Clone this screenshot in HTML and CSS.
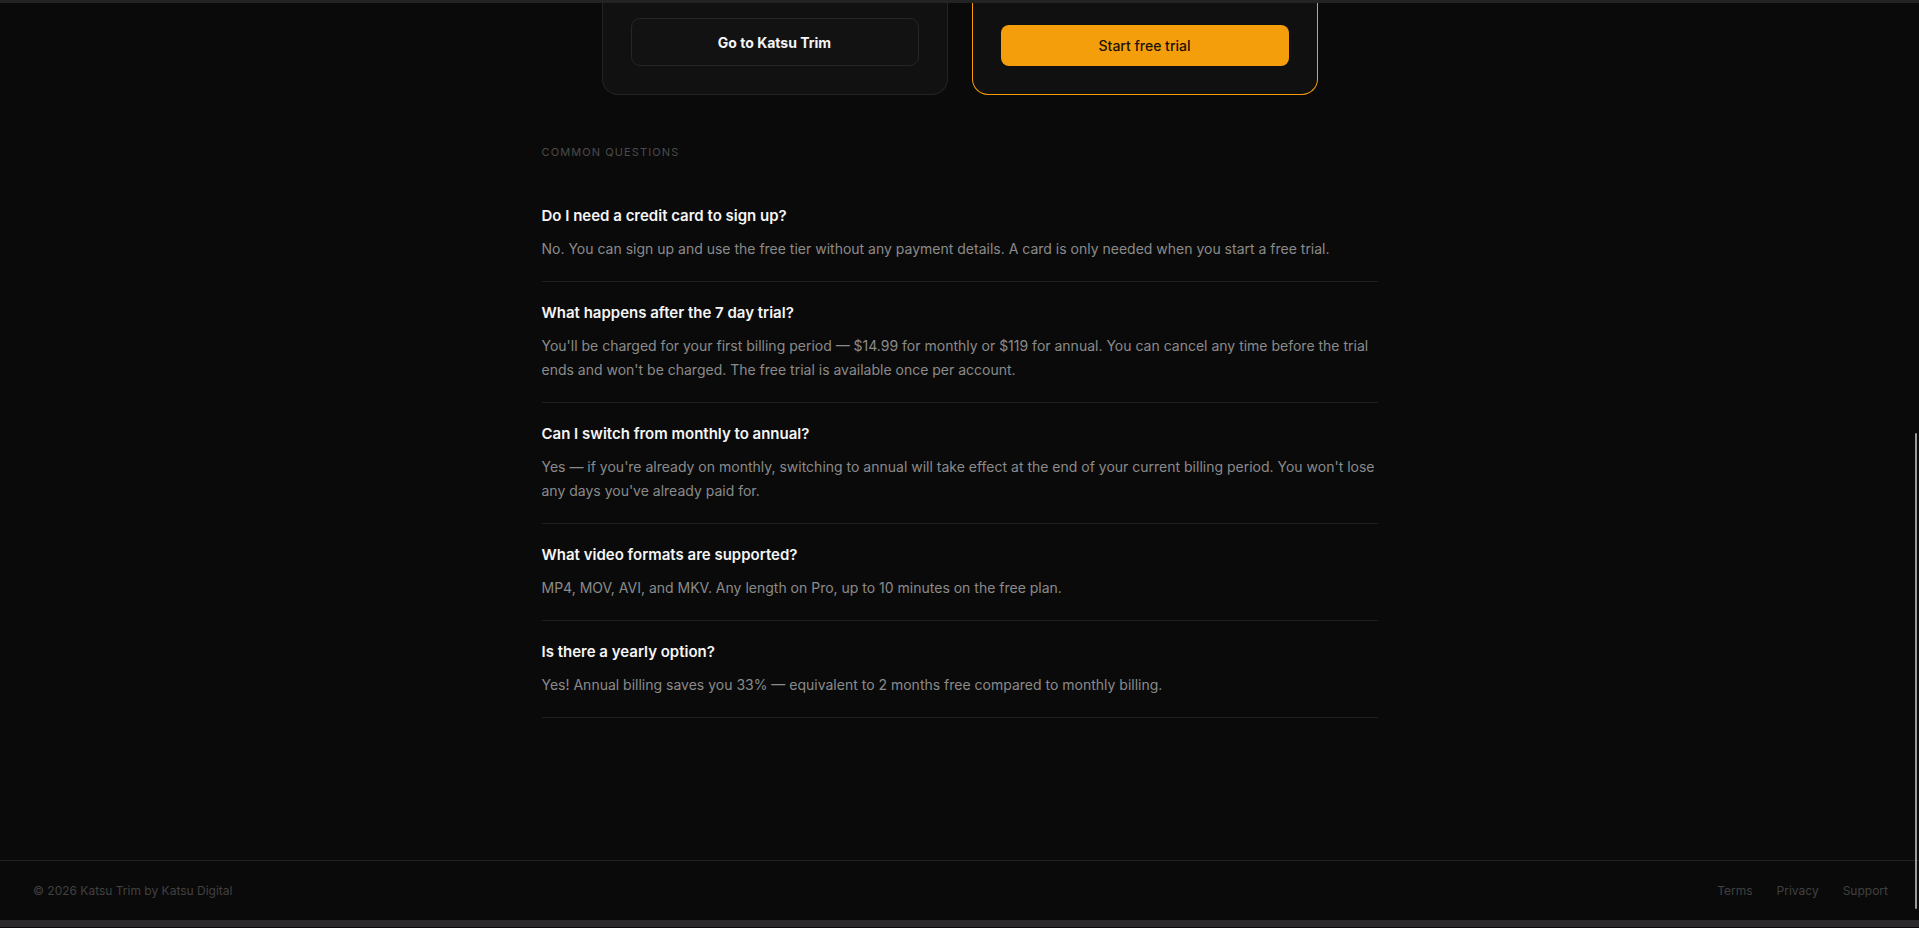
FILE: index.html
```html
<!DOCTYPE html>
<html lang="en">
<head>
<meta charset="utf-8">
<title>Katsu Trim — Pricing</title>
<link rel="stylesheet" href="styles.css">
</head>
<body>
  <div class="topline"></div>

  <main class="page">
    <div class="plans">
      <div class="plan">
        <a class="btn btn-ghost" href="#">Go to Katsu Trim</a>
      </div>
      <div class="plan plan-pro">
        <a class="btn btn-primary" href="#">Start free trial</a>
      </div>
    </div>

    <section class="faq">
      <h2 class="faq-label">Common questions</h2>
      <div class="faq-list">
        <div class="faq-item">
          <h3 class="faq-q">Do I need a credit card to sign up?</h3>
          <p class="faq-a">No. You can sign up and use the free tier without any payment details. A card is only needed when you start a free trial.</p>
        </div>
        <div class="faq-item">
          <h3 class="faq-q">What happens after the 7 day trial?</h3>
          <p class="faq-a">You'll be charged for your first billing period — $14.99 for monthly or $119 for annual. You can cancel any time before the trial ends and won't be charged. The free trial is available once per account.</p>
        </div>
        <div class="faq-item">
          <h3 class="faq-q">Can I switch from monthly to annual?</h3>
          <p class="faq-a">Yes — if you're already on monthly, switching to annual will take effect at the end of your current billing period. You won't lose any days you've already paid for.</p>
        </div>
        <div class="faq-item">
          <h3 class="faq-q">What video formats are supported?</h3>
          <p class="faq-a">MP4, MOV, AVI, and MKV. Any length on Pro, up to 10 minutes on the free plan.</p>
        </div>
        <div class="faq-item">
          <h3 class="faq-q">Is there a yearly option?</h3>
          <p class="faq-a">Yes! Annual billing saves you 33% — equivalent to 2 months free compared to monthly billing.</p>
        </div>
      </div>
    </section>
  </main>

  <footer class="footer">
    <span class="footer-copy">© 2026 Katsu Trim by Katsu Digital</span>
    <nav class="footer-links">
      <a href="#">Terms</a>
      <a href="#">Privacy</a>
      <a href="#">Support</a>
    </nav>
  </footer>

  <div class="bottombar"></div>
  <div class="scroll-thumb"></div>
</body>
</html>
```

FILE: styles.css
```css
* {
  box-sizing: border-box;
}

html,
body {
  margin: 0;
  padding: 0;
  background: #0a0a0a;
  color: #f2f2f2;
  font-family: Inter, "Noto Sans", "Liberation Sans", sans-serif;
  overflow: hidden;
}

a {
  text-decoration: none;
  color: inherit;
}

.topline {
  height: 3px;
  background: #232323;
}

/* plan cards (lower part) */
.plans {
  display: grid;
  grid-template-columns: 1fr 1fr;
  gap: 24px;
  max-width: 716px;
  margin: 0 auto;
}

.plan {
  display: flex;
  flex-direction: column;
  justify-content: flex-end;
  background: #111111;
  border: 1px solid #232323;
  border-top: none;
  border-radius: 0 0 16px 16px;
  padding: 15px 28px 28px;
}

.plan-pro {
  border-color: #f59e0b;
  background: #111010;
  padding-top: 22px;
}

.btn {
  display: flex;
  align-items: center;
  justify-content: center;
  font-size: 14px;
  border-radius: 9px;
}

.btn-ghost {
  height: 48px;
  background: #121212;
  border: 1px solid #262626;
  color: #f5f5f5;
  font-weight: 700;
}

.btn-primary {
  height: 41px;
  background: #f59e0b;
  color: #1a1306;
  font-weight: 500;
  border-radius: 8px;
}

/* FAQ */
.faq {
  max-width: 836px;
  margin: 0 auto;
  padding: 49px 0 142px;
}

.faq-label {
  margin: 0 0 25px;
  font-size: 11px;
  line-height: 16px;
  font-weight: 400;
  letter-spacing: 1.1px;
  text-transform: uppercase;
  color: #4a4a4a;
}

.faq-item {
  padding: 20px 0;
  border-bottom: 1px solid #1f1f1f;
}

.faq-q {
  margin: 0 0 10px;
  font-size: 15px;
  line-height: 22px;
  font-weight: 600;
  color: #f5f5f5;
}

.faq-a {
  margin: 0;
  font-size: 14px;
  line-height: 24px;
  color: #8a8a8a;
}

/* footer */
.footer {
  display: flex;
  align-items: center;
  justify-content: space-between;
  height: 60px;
  padding: 0 31px 0 33px;
  border-top: 1px solid #222222;
  font-size: 12px;
  color: #414141;
}

.footer-links {
  display: flex;
  gap: 24px;
}

.bottombar {
  height: 7px;
  background: #2b292b;
}

.scroll-thumb {
  position: fixed;
  top: 433px;
  right: 2px;
  width: 2px;
  height: 476px;
  border-radius: 1px;
  background: #9a9a9a;
}
```
